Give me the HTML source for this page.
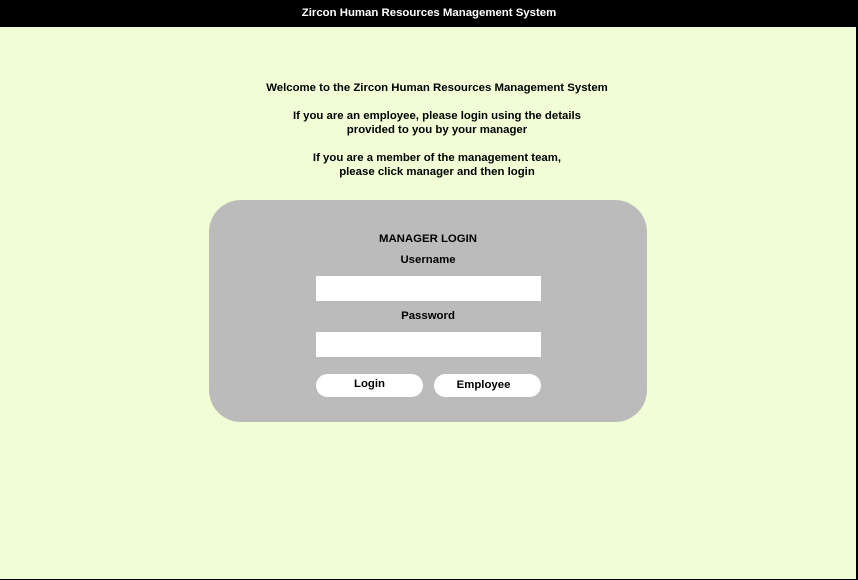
<!DOCTYPE html>
<html><head><style>
*{margin:0;padding:0;box-sizing:border-box}
body{width:858px;height:580px;background:#f1fdd5;font-family:"Liberation Sans",sans-serif;position:relative;overflow:hidden;font-weight:bold;font-size:11.4px;color:#000}
.bar{position:absolute;left:0;top:0;width:858px;height:27px;background:#000;color:#fff;text-align:center;line-height:26px;font-size:11.4px}
.rb{position:absolute;right:0;top:0;width:2px;height:580px;background:#000}
.bb{position:absolute;left:0;bottom:0;width:858px;height:1px;background:#000}
.t{position:absolute;left:0;width:856px;text-align:center;line-height:14px}
.p{left:9px}
.box{position:absolute;left:209px;top:200px;width:438px;height:222px;background:#bbbbbb;border-radius:32px}
.in{position:absolute;left:316px;width:225px;height:25px;background:#fff}
.btn{position:absolute;top:374px;width:107px;height:23px;background:#fff;border-radius:12px}
.bt{position:absolute;width:107px;text-align:center;line-height:14px}
</style></head><body>
<div class="bar">Zircon Human Resources Management System</div>
<div class="rb"></div><div class="bb"></div>
<div class="t p" style="top:81px">Welcome to the Zircon Human Resources Management System</div>
<div class="t p" style="top:109px">If you are an employee, please login using the details<br>provided to you by your manager</div>
<div class="t p" style="top:151px">If you are a member of the management team,<br>please click manager and then login</div>
<div class="box"></div>
<div class="t" style="top:232px">MANAGER LOGIN</div>
<div class="t" style="top:253px">Username</div>
<div class="in" style="top:276px"></div>
<div class="t" style="top:309px">Password</div>
<div class="in" style="top:332px"></div>
<div class="btn" style="left:316px"></div>
<div class="btn" style="left:434px"></div>
<div class="bt" style="left:316px;top:377px">Login</div>
<div class="bt" style="left:430px;top:378px">Employee</div>
</body></html>
